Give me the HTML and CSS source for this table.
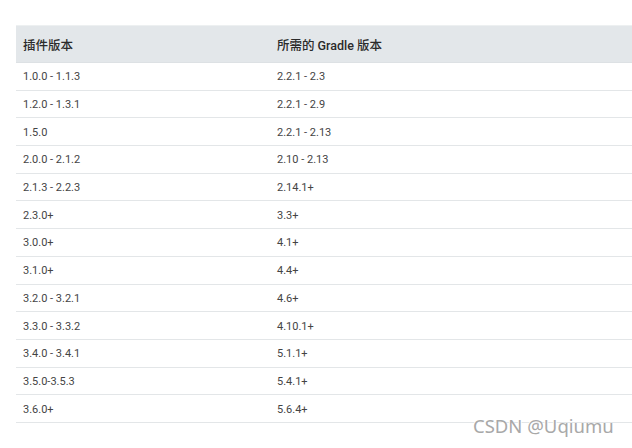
FILE: index.html
```html
<!DOCTYPE html>
<html lang="zh">
<head>
<meta charset="utf-8">
<link rel="stylesheet" href="styles.css">
</head>
<body>
<div class="page">
  <div class="table">
    <div class="row head"><div class="c1">插件版本</div><div class="c2">所需的 Gradle 版本</div></div>
    <div class="row"><div class="c1">1.0.0 - 1.1.3</div><div class="c2">2.2.1 - 2.3</div></div>
    <div class="row"><div class="c1">1.2.0 - 1.3.1</div><div class="c2">2.2.1 - 2.9</div></div>
    <div class="row"><div class="c1">1.5.0</div><div class="c2">2.2.1 - 2.13</div></div>
    <div class="row"><div class="c1">2.0.0 - 2.1.2</div><div class="c2">2.10 - 2.13</div></div>
    <div class="row"><div class="c1">2.1.3 - 2.2.3</div><div class="c2">2.14.1+</div></div>
    <div class="row"><div class="c1">2.3.0+</div><div class="c2">3.3+</div></div>
    <div class="row"><div class="c1">3.0.0+</div><div class="c2">4.1+</div></div>
    <div class="row"><div class="c1">3.1.0+</div><div class="c2">4.4+</div></div>
    <div class="row"><div class="c1">3.2.0 - 3.2.1</div><div class="c2">4.6+</div></div>
    <div class="row"><div class="c1">3.3.0 - 3.3.2</div><div class="c2">4.10.1+</div></div>
    <div class="row"><div class="c1">3.4.0 - 3.4.1</div><div class="c2">5.1.1+</div></div>
    <div class="row"><div class="c1">3.5.0-3.5.3</div><div class="c2">5.4.1+</div></div>
    <div class="row"><div class="c1">3.6.0+</div><div class="c2">5.6.4+</div></div>
  </div>
  <div class="mark">CSDN @Uqiumu</div>
</div>
</body>
</html>
```
FILE: styles.css
```css
html, body { margin: 0; padding: 0; background: #fff; }
.page {
  position: relative;
  width: 632px;
  height: 448px;
  overflow: hidden;
  padding: 25px 0 0 16px;
  box-sizing: border-box;
  font-family: Roboto, "Noto Sans CJK SC", sans-serif;
}
.table { width: 616px; }
.row {
  display: grid;
  grid-template-columns: 254px 1fr;
  height: 27.7px;
  align-items: center;
  border-bottom: 1px solid #e3e6e8;
  box-sizing: border-box;
  font-size: 11px;
  color: #444;
}
.row > div { padding-left: 7px; padding-top: 1px; }
.row.head {
  height: 38px;
  background: #e3e7ea;
  border-top: 1px solid #edf0f1;
  border-bottom: 1px solid #dde1e4;
  font-size: 12.5px;
  font-weight: 500;
  color: #2b2b2b;
}
.mark {
  position: absolute;
  left: 473px;
  top: 413px;
  font-family: "Noto Sans", "DejaVu Sans", sans-serif;
  font-size: 18.5px;
  color: #a8a8a8;
  text-shadow: 1px 1px 0 #fff, -1px 0 0 #fff;
}
```
